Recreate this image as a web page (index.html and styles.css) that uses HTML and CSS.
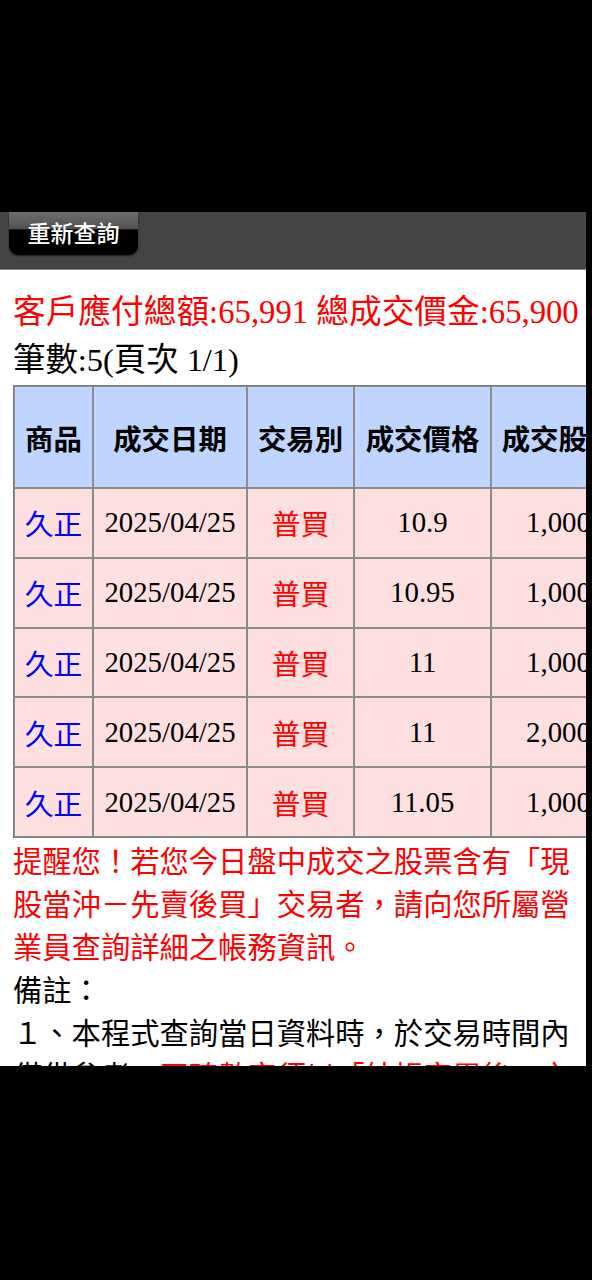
FILE: index.html
```html
<!DOCTYPE html>
<html lang="zh-Hant">
<head>
<meta charset="utf-8">
<title>成交查詢</title>
<link rel="stylesheet" href="styles.css">
</head>
<body>
<div class="screen">
  <div class="topbar">
    <div class="btn">重新查詢</div>
  </div>
  <div class="content">
    <div class="total">客戶應付總額:65,991 總成交價金:65,900</div>
    <div class="count">筆數:5(頁次 1/1)</div>
    <table class="grid">
      <thead>
        <tr>
          <th class="c1">商品</th>
          <th class="c2">成交日期</th>
          <th class="c3">交易別</th>
          <th class="c4">成交價格</th>
          <th class="c5">成交股數</th>
        </tr>
      </thead>
      <tbody>
        <tr><td class="name">久正</td><td>2025/04/25</td><td class="buy">普買</td><td>10.9</td><td>1,000</td></tr>
        <tr><td class="name">久正</td><td>2025/04/25</td><td class="buy">普買</td><td>10.95</td><td>1,000</td></tr>
        <tr><td class="name">久正</td><td>2025/04/25</td><td class="buy">普買</td><td>11</td><td>1,000</td></tr>
        <tr><td class="name">久正</td><td>2025/04/25</td><td class="buy">普買</td><td>11</td><td>2,000</td></tr>
        <tr><td class="name">久正</td><td>2025/04/25</td><td class="buy">普買</td><td>11.05</td><td>1,000</td></tr>
      </tbody>
    </table>
    <div class="notes">
      <p class="warn">提醒您！若您今日盤中成交之股票含有「現股當沖－先賣後買」交易者，請向您所屬營業員查詢詳細之帳務資訊。</p>
      <p>備註：</p>
      <p>１、本程式查詢當日資料時，於交易時間內僅供參考，<span class="warn">正確數字須以「結帳完畢後」之資料為準。</span></p>
    </div>
  </div>
</div>
</body>
</html>
```

FILE: styles.css
```css
html, body {
  margin: 0;
  padding: 0;
  background: #000;
}

body {
  width: 592px;
  height: 1280px;
  overflow: hidden;
}

.screen {
  margin-top: 212px;
  width: 586px;
  height: 854px;
  overflow: hidden;
  background: #fff;
  font-family: "Liberation Serif", "Noto Sans CJK TC", serif;
  color: #000;
}

.topbar {
  height: 57px;
  background: #444444;
  border-bottom: 1px solid #8a8a8a;
  padding-left: 9px;
}

.btn {
  width: 129px;
  height: 43px;
  box-sizing: border-box;
  border-radius: 0 0 9px 9px;
  background: linear-gradient(to bottom, #6e6e6e 0%, #505050 40%, #000 41%, #000 100%);
  box-shadow: 0 1px 2px rgba(0, 0, 0, 0.6);
  color: #fff;
  font-family: "Noto Sans CJK TC", sans-serif;
  font-size: 23px;
  font-weight: 500;
  line-height: 40px;
  text-align: center;
}

.content {
  padding: 18px 0 0 13px;
}

.total {
  color: #ff0000;
  font-size: 32.7px;
  line-height: 48px;
  white-space: nowrap;
}

.count {
  font-size: 32.4px;
  line-height: 48px;
  white-space: nowrap;
}

.grid {
  margin-top: 1px;
  border-collapse: separate;
  border-spacing: 0;
  border: 1px solid #7c7c7c;
  table-layout: fixed;
  width: 614px;
  font-size: 28.8px;
}

.grid th,
.grid td {
  border: 1px solid #8c8c8c;
  padding: 0;
  text-align: center;
  vertical-align: middle;
  white-space: nowrap;
  overflow: hidden;
}

.grid th {
  background: #bfd4fe;
  height: 102px;
  box-sizing: border-box;
  font-family: "Noto Sans CJK TC", sans-serif;
  font-weight: 700;
  font-size: 28.4px;
}

.grid td {
  background: #ffe0e0;
  height: 67.8px;
}

.c1 { width: 79px; }
.c2 { width: 154px; }
.c3 { width: 107px; }
.c4 { width: 137px; }
.c5 { width: 135px; }

.grid td.name {
  color: #0000ff;
  font-family: "Noto Sans CJK TC", sans-serif;
}

.grid td.buy {
  color: #ff0000;
  font-family: "Noto Sans CJK TC", sans-serif;
}

.notes {
  font-family: "Noto Sans CJK TC", sans-serif;
  font-size: 29.3px;
  line-height: 43px;
}

.notes p {
  margin: 0;
}

.warn {
  color: #ff0000;
}
```
